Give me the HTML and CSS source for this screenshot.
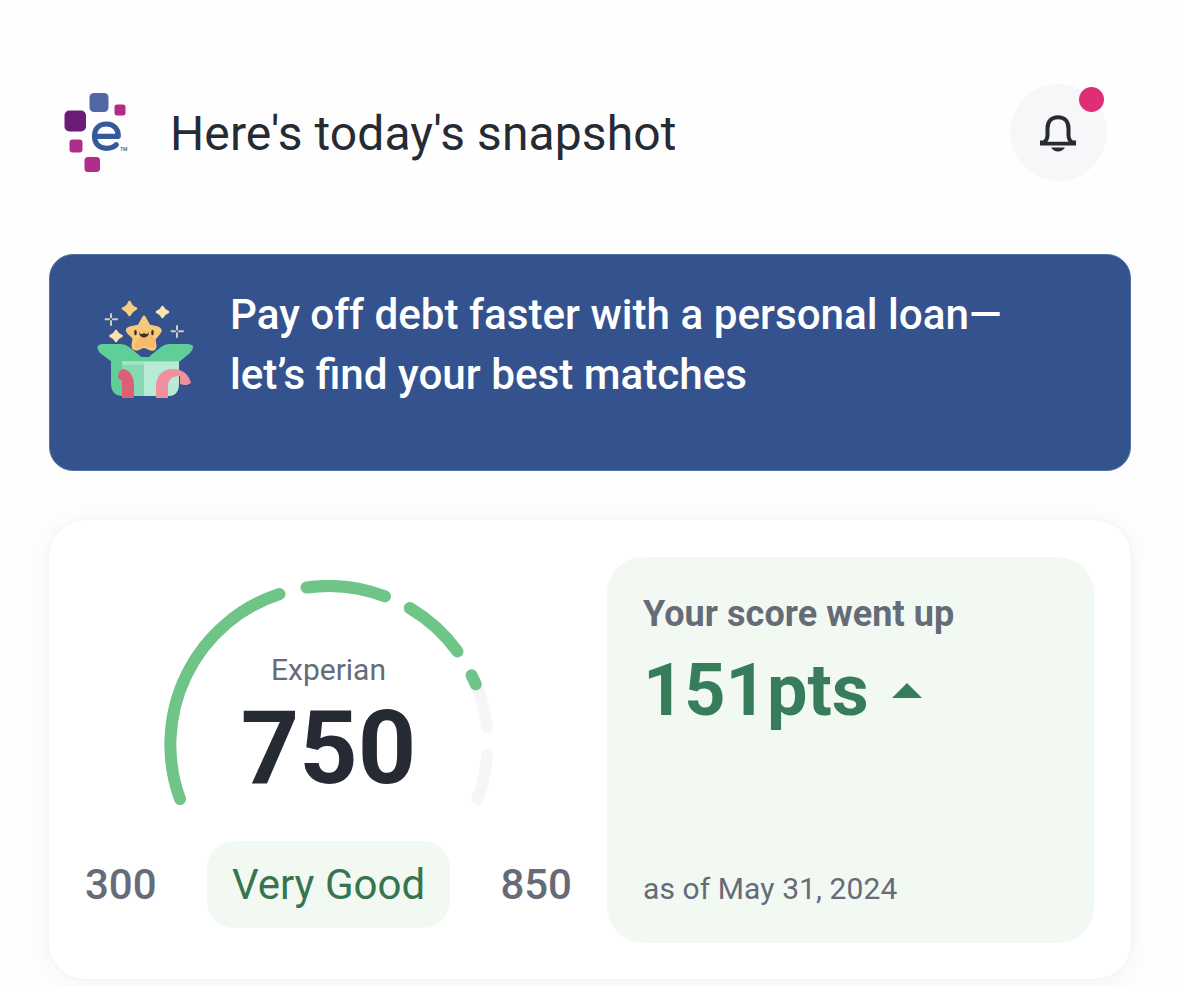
FILE: index.html
```html
<!DOCTYPE html>
<html lang="en">
<head>
    <meta charset="UTF-8">
    <meta name="viewport" content="width=device-width, initial-scale=1.0">
    <title>Today's snapshot</title>
    <link rel="stylesheet" href="styles.css">
</head>
<body>
    <header class="header">
        <svg class="logo" viewBox="0 0 66 82" width="66" height="82">
            <rect x="25.5" y="1" width="19" height="19" rx="4.5" fill="#5068a5"/>
            <rect x="50.5" y="12.5" width="11" height="11" rx="2.5" fill="#b02d8c"/>
            <rect x="0.5" y="18.5" width="21.5" height="21" rx="5" fill="#6d1b78"/>
            <rect x="5.5" y="47.5" width="13" height="13" rx="3" fill="#b02d8c"/>
            <rect x="20.5" y="65" width="15.5" height="15" rx="3.5" fill="#b02d8c"/>
            <path d="M30.500 44.300H54.300C54.500 37 50 32 42.500 32C35 32 30.500 37 30.500 44.300C30.500 51.500 35 56.300 42.500 56.300C47 56.300 50 55 52.300 52.700" fill="none" stroke="#345a9a" stroke-width="5.200" stroke-linecap="round" stroke-linejoin="round"/>
            <text class="logo-tm" x="56" y="58.500">TM</text>
        </svg>
        <h1>Here's today's snapshot</h1>
        <button class="bell" aria-label="Notifications">
            <svg viewBox="0 0 38 38" width="38" height="38">
                <path d="M3.500 29.500C7.500 27.500 8.500 25 8.500 21V14.500C8.500 7.500 12.500 3.200 19 3.200S29.500 7.500 29.500 14.500V21C29.500 25 30.500 27.500 34.500 29.500" fill="none" stroke="#262b33" stroke-width="4"/>
                <path d="M1 26.500H5L8 27.800H30L33 26.500H37V31.500H1Z" fill="#262b33"/>
                <path d="M12 33.500H26C24 36.300 22 37.500 19 37.500S14 36.300 12 33.500Z" fill="#262b33"/>
            </svg>
            <span class="badge"></span>
        </button>
    </header>

    <section class="banner">
        <svg class="gift" viewBox="0 0 98 100" width="98" height="100">
            <path d="M14 58H82V84Q82 97 71 97H26Q14 97 14 84Z" fill="#5fcf97"/>
            <path d="M25 62H47V97H30Q25 97 25 92Z" fill="#85d9b5"/>
            <path d="M47 62H82V84Q82 97 71 97H47Z" fill="#b7ebd6"/>
            <path d="M5 45H24Q28 45 32 48L48 61V63H15L3 54Q-3 46 5 45Z" fill="#5fcf97"/>
            <path d="M91 45H72Q68 45 64 48L48 61V63H82L93 54Q100 46 91 45Z" fill="#5fcf97"/>
            <path d="M25 62H82V66H25Z" fill="#b7ebd6" opacity=".6"/>
            <path d="M25 99V82L21 79Q21 70 27 70C34 72 37 79 37 86V99Z" fill="#dc6075"/>
            <path d="M59 99V86C60 76 66 70 76 70C86 70 92 76 94 84L90 86L87 86L83 85V77Q71 77 71 87V99Z" fill="#f08f9d"/>
            <path d="M47 18L52 27L61 29Q65 31 62 34L57 40L58 47Q58 51 54 50L47 47L40 50Q36 50 36 47L37 39L31 33Q29 30 33 29L42 27Z" fill="#f8c979" stroke="#f8c979" stroke-width="3" stroke-linejoin="round"/>
            <path d="M47 31L58 40L58 49L47 47L39 50L37 46Z" fill="#f5b562" opacity=".65"/>
            <ellipse cx="38.500" cy="33.500" rx="1.300" ry="2.800" fill="#3d302c"/>
            <ellipse cx="55.500" cy="33.500" rx="1.300" ry="2.800" fill="#3d302c"/>
            <path d="M42 33C43 35 45 36 47 34C49 36 51 35 52 33C52 36 50 38.500 47 38.500S42 36 42 33Z" fill="#3d302c"/>
            <g stroke-width="2.500" stroke-linejoin="round">
                <path d="M32.500 3Q34.500 8 39 9.500Q34.500 11.500 32.500 16Q30.500 11.500 26 9.500Q30.500 8 32.500 3Z" fill="#f6cf83" stroke="#f6cf83"/>
                <g fill="#fbe3af" stroke="#fbe3af">
                    <path d="M65.500 8Q67 11.500 71 13Q67 14.500 65.500 18Q64 14.500 60 13Q64 11.500 65.500 8Z"/>
                    <path d="M19 32Q20.500 35.500 24.500 37Q20.500 38.500 19 42Q17.500 38.500 13.500 37Q17.500 35.500 19 32Z"/>
                </g>
            </g>
            <path d="M14 15V18.500M14 22V26M8.500 20.300H12M16 20.300H20M80 27V30.500M80 34V38M74.500 32.300H78M82 32.300H86" fill="none" stroke="#d0cebf" stroke-width="2" stroke-linecap="round"/>
        </svg>
        <p>Pay off debt faster with a personal loan—<br>let’s find your best matches</p>
    </section>

    <main class="card">
        <div class="score">
            <div class="gauge">
                <svg viewBox="164 580 329 226" width="329" height="226">
                    <g fill="none" stroke-width="12" stroke-linecap="round">
                        <g stroke="#f6f6f9">
                            <path d="M476 684.300A158.500 158.500 0 0 1 487 727"/>
                            <path d="M487 755A158.500 158.500 0 0 1 477.500 799"/>
                        </g>
                        <g stroke="#6fc487">
                            <path d="M180 799A158.500 158.500 0 0 1 279.500 594"/>
                            <path d="M306.500 587.500A158.500 158.500 0 0 1 385 596.300"/>
                            <path d="M409.700 608A158.500 158.500 0 0 1 457.500 651.500"/>
                            <path d="M471.500 675.300A158.500 158.500 0 0 1 475.800 684.300"/>
                        </g>
                    </g>
                </svg>
                <div class="gauge-text">
                    <span class="bureau">Experian</span>
                    <strong class="value">750</strong>
                </div>
            </div>
            <div class="range">
                <span class="limit">300</span>
                <span class="rating">Very Good</span>
                <span class="limit">850</span>
            </div>
        </div>
        <div class="change">
            <h2>Your score went up</h2>
            <div class="points">
                <span>151pts</span>
                <svg viewBox="0 0 30 15" width="30" height="15"><path d="M0 15L15 0L30 15Z" fill="#377d5b"/></svg>
            </div>
            <p class="date">as of May 31, 2024</p>
        </div>
    </main>
</body>
</html>
```
FILE: styles.css
```css
* {
    box-sizing: border-box;
}
body {
    font-family: Roboto, 'Liberation Sans', sans-serif;
    margin: 0;
    padding: 84px 48.5px 0;
    height: 986px;
    overflow: hidden;
    background-color: #fefefe;
    color: #262b33;
}
h1, h2, p {
    margin: 0;
    white-space: nowrap;
}
.header {
    display: flex;
    align-items: center;
    height: 97px;
    padding: 0 24px 0 15.5px;
}
.logo {
    margin-right: 40px;
}
.logo-tm {
    font-size: 5px;
    font-weight: 500;
    fill: #2d5da5;
}
.header h1 {
    padding-top: 2px;
    font-size: 48px;
    font-weight: 400;
    letter-spacing: 0.1px;
    line-height: 60px;
}
.bell {
    position: relative;
    display: flex;
    align-items: center;
    justify-content: center;
    width: 97px;
    height: 97px;
    margin-left: auto;
    padding: 0 1px 0 0;
    border: 0;
    border-radius: 50%;
    background-color: #f7f7fa;
}
.badge {
    position: absolute;
    top: 3px;
    right: 3px;
    width: 25px;
    height: 25px;
    border-radius: 50%;
    background-color: #df2d76;
}
.banner {
    display: flex;
    align-items: flex-start;
    height: 217px;
    margin-top: 73px;
    padding: 30px 47.5px;
    border: 1px solid #5474a3;
    border-radius: 24px;
    background-color: #34538e;
    color: #fff;
}
.gift {
    margin-top: 14px;
}
.banner p {
    margin-left: 35px;
    font-size: 42.2px;
    font-weight: 500;
    line-height: 60px;
}
.card {
    display: flex;
    justify-content: space-between;
    height: 459px;
    margin-top: 49px;
    padding: 37px 36.5px 36px;
    border-radius: 36px;
    background-color: #fff;
    box-shadow: 0 3px 28px rgba(0,0,0,0.05), 0 0 3px rgba(0,0,0,0.05);
}
.score {
    width: 487px;
    padding-top: 23px;
}
.gauge {
    display: grid;
    justify-content: center;
}
.gauge > * {
    grid-area: 1 / 1;
}
.gauge-text {
    display: flex;
    flex-direction: column;
    align-items: center;
    padding-top: 72px;
}
.bureau {
    font-size: 30px;
    line-height: 36px;
    color: #656b77;
}
.value {
    font-size: 102px;
    line-height: 120px;
}
.range {
    display: flex;
    align-items: center;
    justify-content: space-between;
    margin-top: 33px;
}
.limit {
    font-size: 42px;
    font-weight: 500;
    color: #656b77;
}
.rating {
    width: 243px;
    border-radius: 27px;
    background-color: #f2f9f3;
    color: #37754f;
    font-size: 42px;
    line-height: 87px;
    text-align: center;
}
.change {
    display: flex;
    flex-direction: column;
    width: 487px;
    padding: 36px;
    border-radius: 36px;
    background-color: #f2f9f3;
}
.change h2 {
    font-size: 36px;
    font-weight: 700;
    letter-spacing: 0.06px;
    line-height: 42px;
    color: #656b77;
}
.points {
    display: flex;
    align-items: center;
    gap: 23px;
    font-size: 72px;
    font-weight: 700;
    line-height: 84px;
    margin-top: 14px;
    color: #377d5b;
}
.points svg {
    margin-bottom: 2px;
}
.date {
    margin-top: auto;
    font-size: 30px;
    letter-spacing: 0.1px;
    line-height: 36px;
    color: #656b77;
}
```
